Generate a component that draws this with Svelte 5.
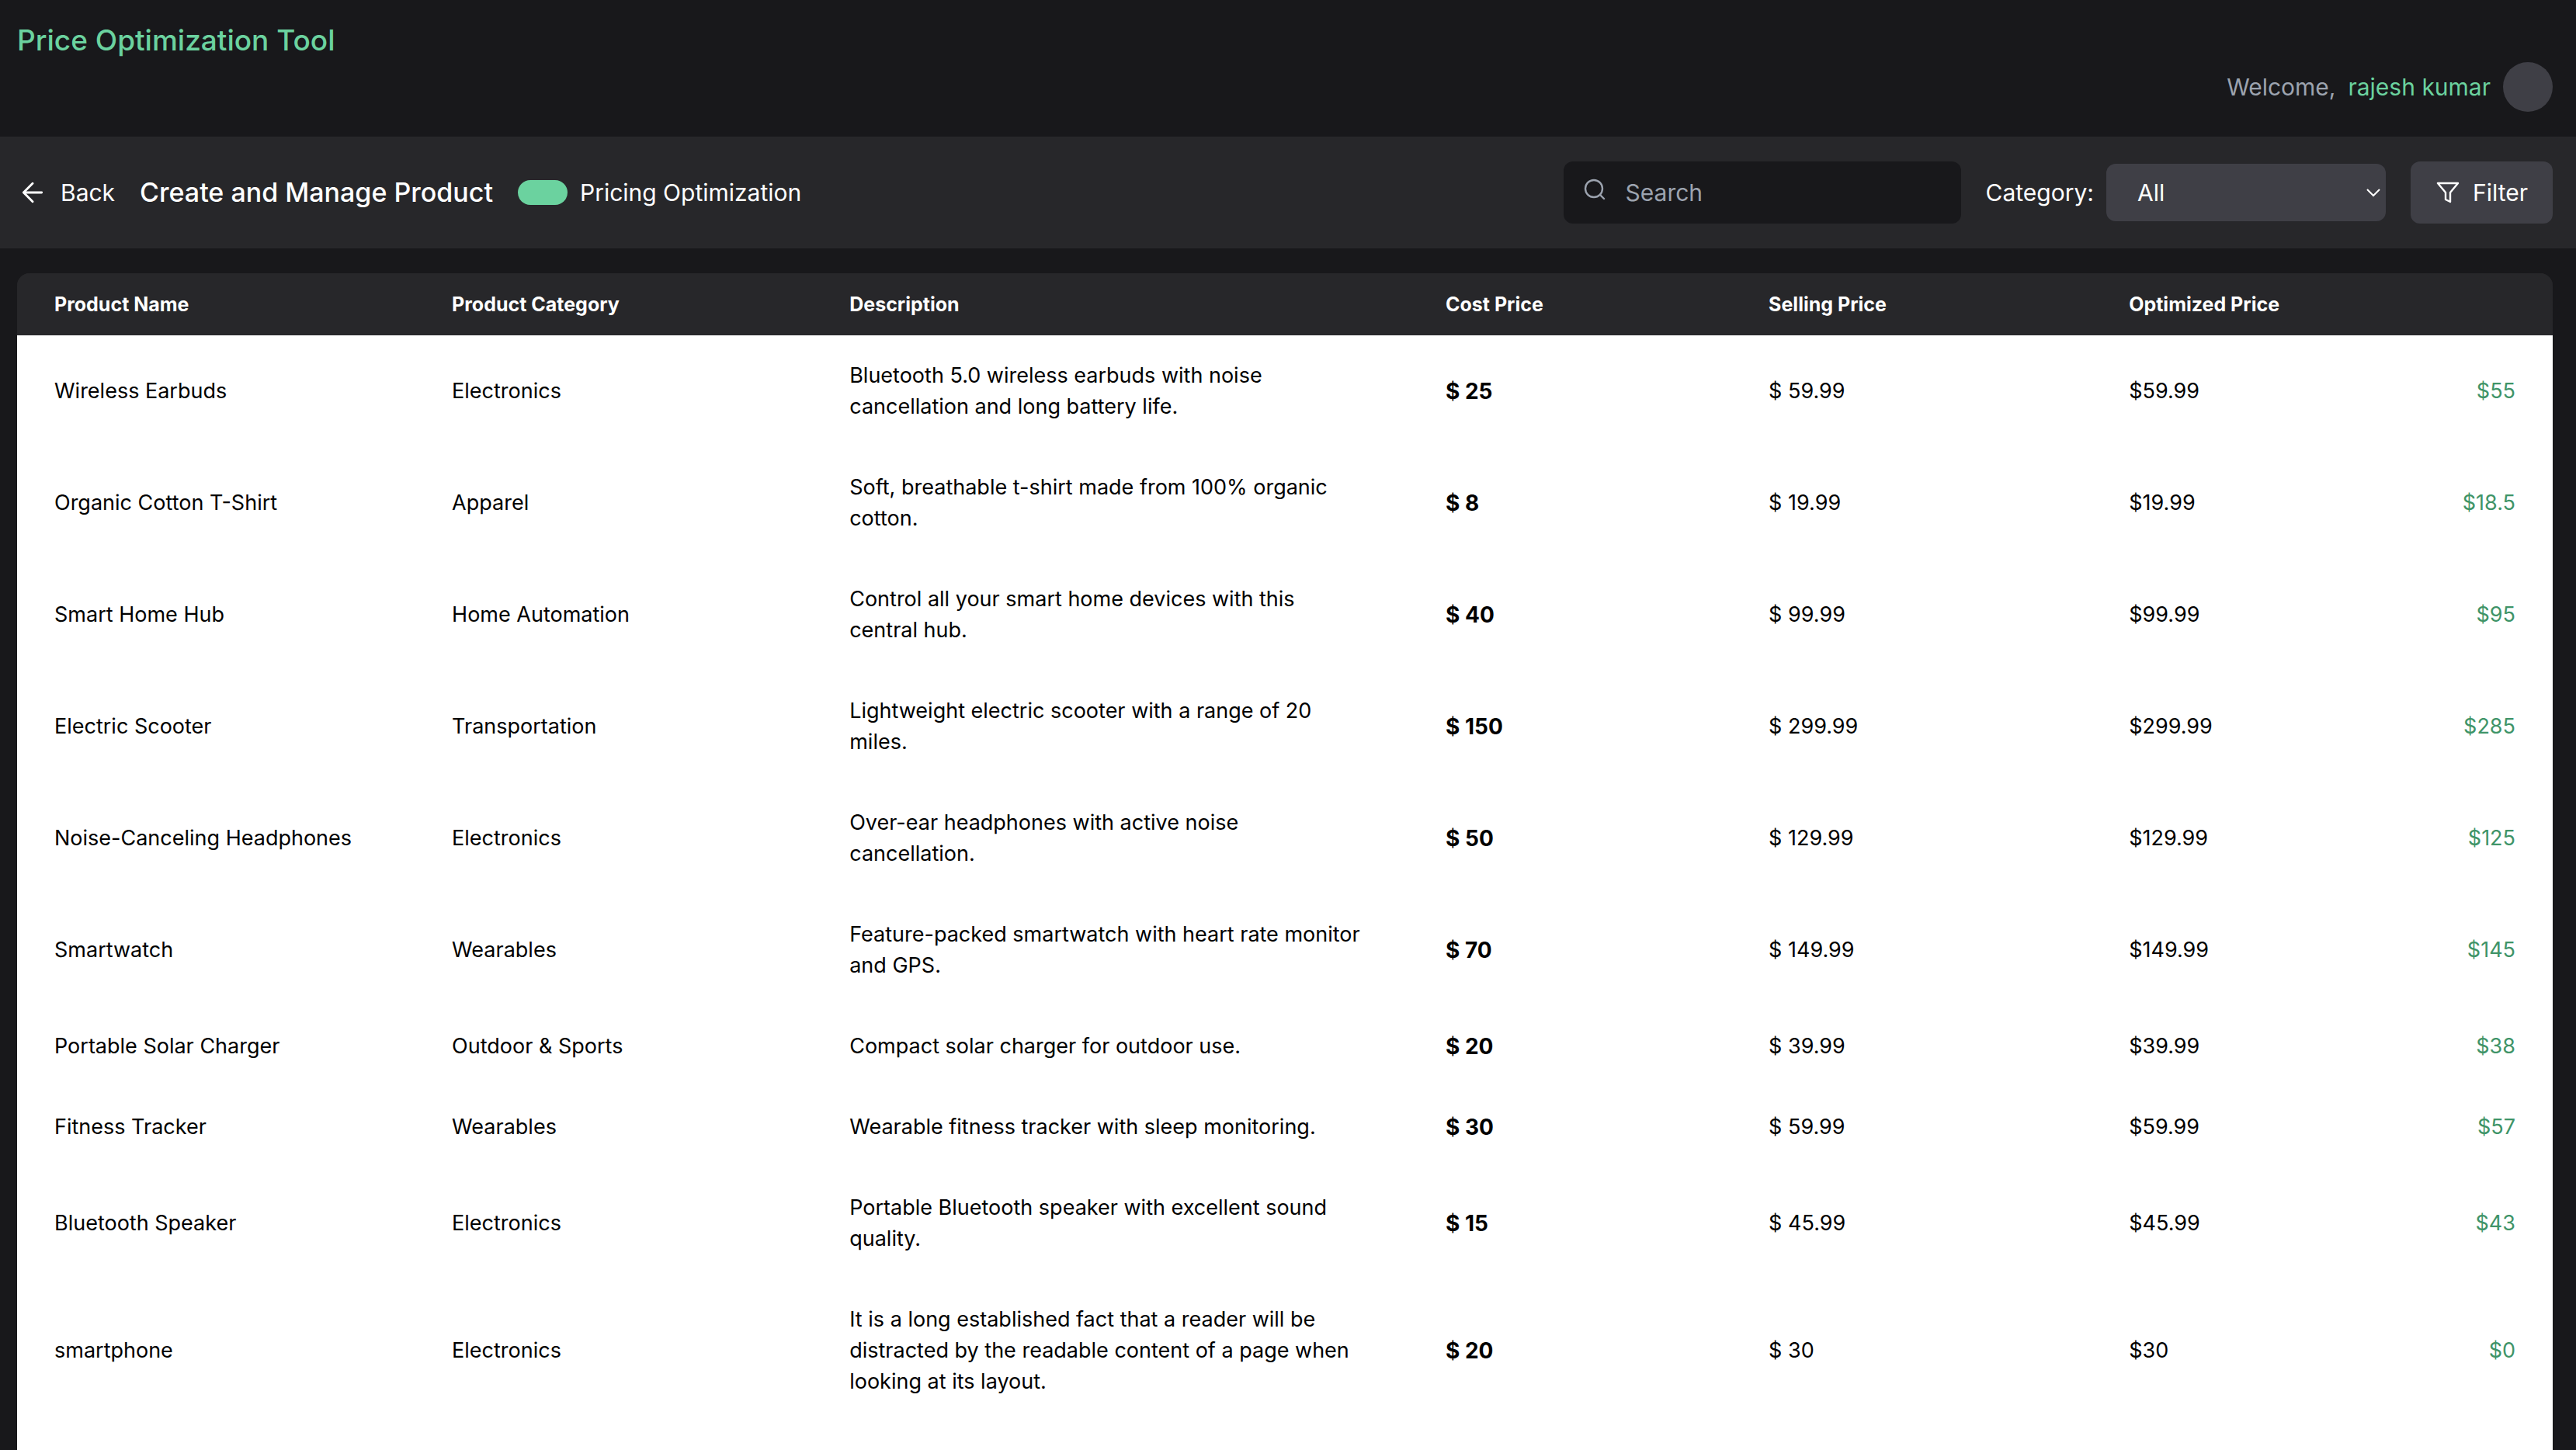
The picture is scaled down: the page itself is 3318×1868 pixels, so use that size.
<script>
  const products = [
    { name: 'Wireless Earbuds', category: 'Electronics', description: 'Bluetooth 5.0 wireless earbuds with noise cancellation and long battery life.', cost: '25', selling: '59.99', optimized: '55' },
    { name: 'Organic Cotton T-Shirt', category: 'Apparel', description: 'Soft, breathable t-shirt made from 100% organic cotton.', cost: '8', selling: '19.99', optimized: '18.5' },
    { name: 'Smart Home Hub', category: 'Home Automation', description: 'Control all your smart home devices with this central hub.', cost: '40', selling: '99.99', optimized: '95' },
    { name: 'Electric Scooter', category: 'Transportation', description: 'Lightweight electric scooter with a range of 20 miles.', cost: '150', selling: '299.99', optimized: '285' },
    { name: 'Noise-Canceling Headphones', category: 'Electronics', description: 'Over-ear headphones with active noise cancellation.', cost: '50', selling: '129.99', optimized: '125' },
    { name: 'Smartwatch', category: 'Wearables', description: 'Feature-packed smartwatch with heart rate monitor and GPS.', cost: '70', selling: '149.99', optimized: '145' },
    { name: 'Portable Solar Charger', category: 'Outdoor & Sports', description: 'Compact solar charger for outdoor use.', cost: '20', selling: '39.99', optimized: '38' },
    { name: 'Fitness Tracker', category: 'Wearables', description: 'Wearable fitness tracker with sleep monitoring.', cost: '30', selling: '59.99', optimized: '57' },
    { name: 'Bluetooth Speaker', category: 'Electronics', description: 'Portable Bluetooth speaker with excellent sound quality.', cost: '15', selling: '45.99', optimized: '43' },
    { name: 'smartphone', category: 'Electronics', description: 'It is a long established fact that a reader will be distracted by the readable content of a page when looking at its layout.', cost: '20', selling: '30', optimized: '0' }
  ];
  const categories = ['All', ...new Set(products.map((p) => p.category))];

  let search = $state('');
  let category = $state('All');
  let pricing = $state(true);

  const visible = $derived(
    products.filter(
      (p) =>
        (category === 'All' || p.category === category) &&
        p.name.toLowerCase().includes(search.toLowerCase())
    )
  );
</script>

<div class="page">
  <header class="top">
    <h1>Price Optimization Tool</h1>
    <div class="user">
      <span class="welcome">Welcome,</span>
      <span class="username">rajesh kumar</span>
      <span class="avatar"></span>
    </div>
  </header>

  <section class="toolbar">
    <button class="back" type="button">
      <svg class="back-icon" viewBox="0 0 24 24" aria-hidden="true">
        <path d="M12 19l-7-7 7-7M19 12H5" />
      </svg>
      Back
    </button>
    <h2>Create and Manage Product</h2>
    <label class="toggle">
      <input type="checkbox" bind:checked={pricing} />
      Pricing Optimization
    </label>

    <div class="controls">
      <div class="search">
        <svg class="search-icon" viewBox="0 0 28 28" aria-hidden="true">
          <circle cx="13" cy="13" r="11" />
          <path d="M21 21l5 5" />
        </svg>
        <input type="search" placeholder="Search" aria-label="Search" bind:value={search} />
      </div>
      <div class="field">
        <label for="category">Category:</label>
        <div class="select">
          <select id="category" bind:value={category}>
            {#each categories as option}
              <option value={option}>{option}</option>
            {/each}
          </select>
          <svg class="chevron" viewBox="0 0 20 12" aria-hidden="true">
            <path d="M2 2l8 8 8-8" />
          </svg>
        </div>
      </div>
      <button class="filter" type="button">
        <svg class="filter-icon" viewBox="0 0 32 32" aria-hidden="true">
          <path d="M3 4H29L19 16V28L13 25V16Z" />
        </svg>
        Filter
      </button>
    </div>
  </section>

  <main>
    <table>
      <colgroup>
        <col class="name" />
        <col class="category" />
        <col class="description" />
        <col class="cost" />
        <col class="selling" />
        <col class="optimized" />
      </colgroup>
      <thead>
        <tr>
          <th scope="col">Product Name</th>
          <th scope="col">Product Category</th>
          <th scope="col">Description</th>
          <th scope="col">Cost Price</th>
          <th scope="col">Selling Price</th>
          <th scope="col">Optimized Price</th>
        </tr>
      </thead>
      <tbody>
        {#each visible as product}
          <tr>
            <td>{product.name}</td>
            <td>{product.category}</td>
            <td class="details">{product.description}</td>
            <td class="strong">$ {product.cost}</td>
            <td>$ {product.selling}</td>
            <td>
              <div class="prices">
                <span>${product.selling}</span>
                <span class="suggested">${product.optimized}</span>
              </div>
            </td>
          </tr>
        {/each}
      </tbody>
    </table>
  </main>
</div>

<style>
  :global(body) {
    background: #18181b;
  }

  .page {
    display: flex;
    flex-direction: column;
    min-height: 100vh;
    background: #18181b;
    color: #fff;
    font-family: Inter, sans-serif;
    font-size: 30px;
    line-height: 48px;
  }

  .page * {
    box-sizing: border-box;
  }

  h1,
  h2 {
    margin: 0;
    font-weight: 500;
  }

  button,
  input,
  select {
    margin: 0;
    border: 0;
    color: inherit;
    font: inherit;
  }

  svg {
    display: block;
    flex: none;
    fill: none;
    stroke: currentColor;
  }

  .top {
    padding: 24px 30px 32px 22px;
  }

  h1 {
    color: #6bd29f;
    font-size: 37px;
    line-height: 56px;
  }

  .user {
    display: flex;
    align-items: center;
    justify-content: flex-end;
    gap: 16px;
  }

  .welcome {
    color: #9ca3af;
  }

  .username {
    color: #6bd29f;
  }

  .avatar {
    width: 64px;
    height: 64px;
    border-radius: 50%;
    background: #3f3f46;
  }

  .toolbar {
    display: flex;
    align-items: center;
    gap: 32px;
    padding: 32px 30px 32px 22px;
    background: #27272a;
  }

  h2 {
    font-size: 34px;
  }

  .back,
  .toggle,
  .field,
  .filter {
    display: flex;
    align-items: center;
    gap: 16px;
  }

  .back {
    padding: 0;
    background: none;
  }

  .back-icon {
    width: 40px;
    height: 40px;
    stroke-width: 1.7;
    stroke-linecap: round;
    stroke-linejoin: round;
  }

  .toggle input {
    appearance: none;
    width: 64px;
    height: 32px;
    border-radius: 16px;
    background: #3f3f46;
  }

  .toggle input:checked {
    background: #6bd29f;
  }

  .controls {
    display: flex;
    align-items: center;
    gap: 32px;
    margin-left: auto;
  }

  .search,
  .select {
    position: relative;
  }

  .search input {
    display: block;
    appearance: none;
    width: 512px;
    height: 80px;
    padding: 0 32px 0 80px;
    border-radius: 12px;
    background: #18181b;
  }

  .search input::placeholder {
    color: #9ca3af;
    opacity: 1;
  }

  .search-icon {
    position: absolute;
    top: 22px;
    left: 26px;
    width: 28px;
    height: 28px;
    color: #9ca3af;
    stroke-width: 2.4;
    stroke-linecap: round;
  }

  .select select {
    display: block;
    appearance: none;
    width: 360px;
    height: 74px;
    padding: 0 40px;
    border-radius: 12px;
    background: #3f3f46;
  }

  .chevron {
    position: absolute;
    top: 31px;
    right: 6px;
    width: 20px;
    height: 12px;
    stroke-width: 2;
    pointer-events: none;
  }

  .filter {
    height: 80px;
    padding: 0 32px;
    border-radius: 12px;
    background: #3f3f46;
  }

  .filter-icon {
    width: 32px;
    height: 32px;
    stroke-width: 2.4;
    stroke-linejoin: round;
  }

  main {
    flex: 1;
    margin: 32px 30px 0 22px;
    overflow: hidden;
    border-radius: 16px 16px 0 0;
    background: linear-gradient(#27272a 40px, #fff 40px);
    color: #000;
  }

  table {
    width: 100%;
    table-layout: fixed;
    border-collapse: collapse;
    font-size: 27px;
    line-height: 40px;
    text-align: left;
  }

  .name,
  .category {
    width: 15.68%;
  }

  .description {
    width: 23.51%;
  }

  .cost {
    width: 12.74%;
  }

  .selling {
    width: 14.21%;
  }

  .optimized {
    width: 18.18%;
  }

  th {
    padding: 20px 48px;
    background: #27272a;
    color: #fff;
    font-size: 25px;
    font-weight: 700;
  }

  td {
    padding: 32px 48px;
    vertical-align: middle;
  }

  .details {
    padding-right: 56px;
  }

  .strong {
    font-size: 28px;
    font-weight: 700;
  }

  .prices {
    display: flex;
    justify-content: space-between;
  }

  .suggested {
    color: #3f9468;
  }
</style>
